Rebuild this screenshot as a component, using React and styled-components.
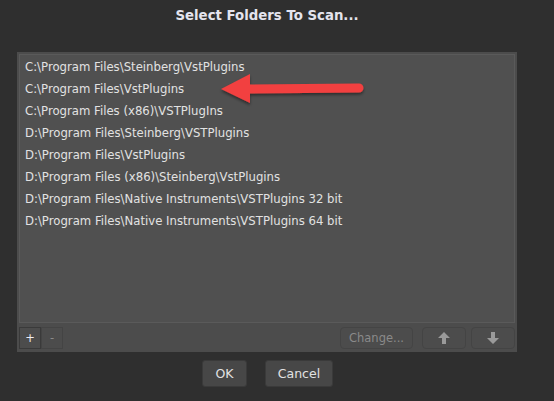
import styled, { createGlobalStyle } from "styled-components"

const GlobalStyle = createGlobalStyle`
body {
  margin: 0;
  background: #2f2f2f;
  font-family: "DejaVu Sans", Verdana, sans-serif;
}
`

const Dialog = styled.div`
width: 534px;
height: 401px;
position: relative;
display: flex;
flex-direction: column;
`

const Title = styled.h1`
margin: 0;
height: 31px;
display: flex;
align-items: center;
justify-content: center;
font-size: 13.3px;
font-weight: bold;
color: #e4e4ee;
`

const Panel = styled.div`
margin: 21px 0 0 17px;
width: 500px;
height: 300px;
box-sizing: border-box;
background: #4c4c4c;
padding: 2px 2px 0 2px;
display: flex;
flex-direction: column;
`

const List = styled.ul`
list-style: none;
margin: 0;
padding: 1px 0 0 0;
flex: 1;
background: #505050;
border: 1px solid #5a5a5a;
`

const Row = styled.li`
height: 22px;
line-height: 22px;
padding-left: 5px;
font-size: 11.7px;
color: #e2e2e2;
white-space: nowrap;
`

const Toolbar = styled.div`
height: 29px;
display: flex;
align-items: center;
`

const ToolButton = styled.button`
height: 22px;
min-width: ${p => p.$w || 22}px;
margin-left: ${p => p.$gap || 0}px;
box-sizing: border-box;
padding: 0;
background: #4c4c4c;
border: 1px solid ${p => (p.$active ? "#3a3a3a" : "#444")};
border-radius: ${p => p.$round ? 4 : 0}px;
color: ${p => (p.$active ? "#eeeef4" : "#8a8a8a")};
font-family: inherit;
font-size: 11.5px;
display: flex;
align-items: center;
justify-content: center;
`

const Spacer = styled.div`
flex: 1;
`

const Footer = styled.div`
display: flex;
justify-content: center;
gap: 18px;
margin-top: 8px;
padding-left: 1px;
`

const DialogButton = styled.button`
height: 27px;
min-width: ${p => p.$w}px;
box-sizing: border-box;
background: #474747;
border: 1px solid #3a3a3a;
border-radius: 3px;
color: #e2e2e2;
font-family: inherit;
font-size: 12.5px;
`

const Arrow = styled.svg`
position: absolute;
left: 216px;
top: 70px;
overflow: visible;
`

const Up = () => (
  <svg width="14" height="14" viewBox="0 0 14 14">
    <path d="M7 1 L13 7 L9 7 L9 13 L5 13 L5 7 L1 7 Z" fill="#9a9a9a" />
  </svg>
)

const Down = () => (
  <svg width="14" height="14" viewBox="0 0 14 14">
    <path d="M7 13 L13 7 L9 7 L9 1 L5 1 L5 7 L1 7 Z" fill="#9a9a9a" />
  </svg>
)

const folders = [
  "C:\\Program Files\\Steinberg\\VstPlugins",
  "C:\\Program Files\\VstPlugins",
  "C:\\Program Files (x86)\\VSTPlugIns",
  "D:\\Program Files\\Steinberg\\VSTPlugins",
  "D:\\Program Files\\VstPlugins",
  "D:\\Program Files (x86)\\Steinberg\\VstPlugins",
  "D:\\Program Files\\Native Instruments\\VSTPlugins 32 bit",
  "D:\\Program Files\\Native Instruments\\VSTPlugins 64 bit",
]

const App = () => {
  return (
    <Dialog>
      <GlobalStyle />
      <Title>Select Folders To Scan...</Title>
      <Panel>
        <List>
          {folders.map(f => <Row key={f}>{f}</Row>)}
        </List>
        <Toolbar>
          <ToolButton $active>+</ToolButton>
          <ToolButton>-</ToolButton>
          <Spacer />
          <ToolButton $w={73} $round>Change...</ToolButton>
          <ToolButton $w={44} $gap={9} $round><Up /></ToolButton>
          <ToolButton $w={44} $gap={5} $round><Down /></ToolButton>
        </Toolbar>
      </Panel>
      <Footer>
        <DialogButton $w={45}>OK</DialogButton>
        <DialogButton $w={68}>Cancel</DialogButton>
      </Footer>
      <Arrow width="160" height="40" viewBox="0 0 160 40">
        <defs>
          <filter id="sh" x="-10%" y="-30%" width="120%" height="180%">
            <feDropShadow dx="0" dy="2" stdDeviation="1.5" floodColor="#000" floodOpacity="0.45" />
          </filter>
        </defs>
        <g filter="url(#sh)">
          <path d="M5 19 L34 4 L34 14.5 L143 13.5 A4.5 4.5 0 0 1 143 22.5 L34 23.5 L34 33 Z" fill="#f2403f" />
        </g>
      </Arrow>
    </Dialog>
  )
}

export default App
